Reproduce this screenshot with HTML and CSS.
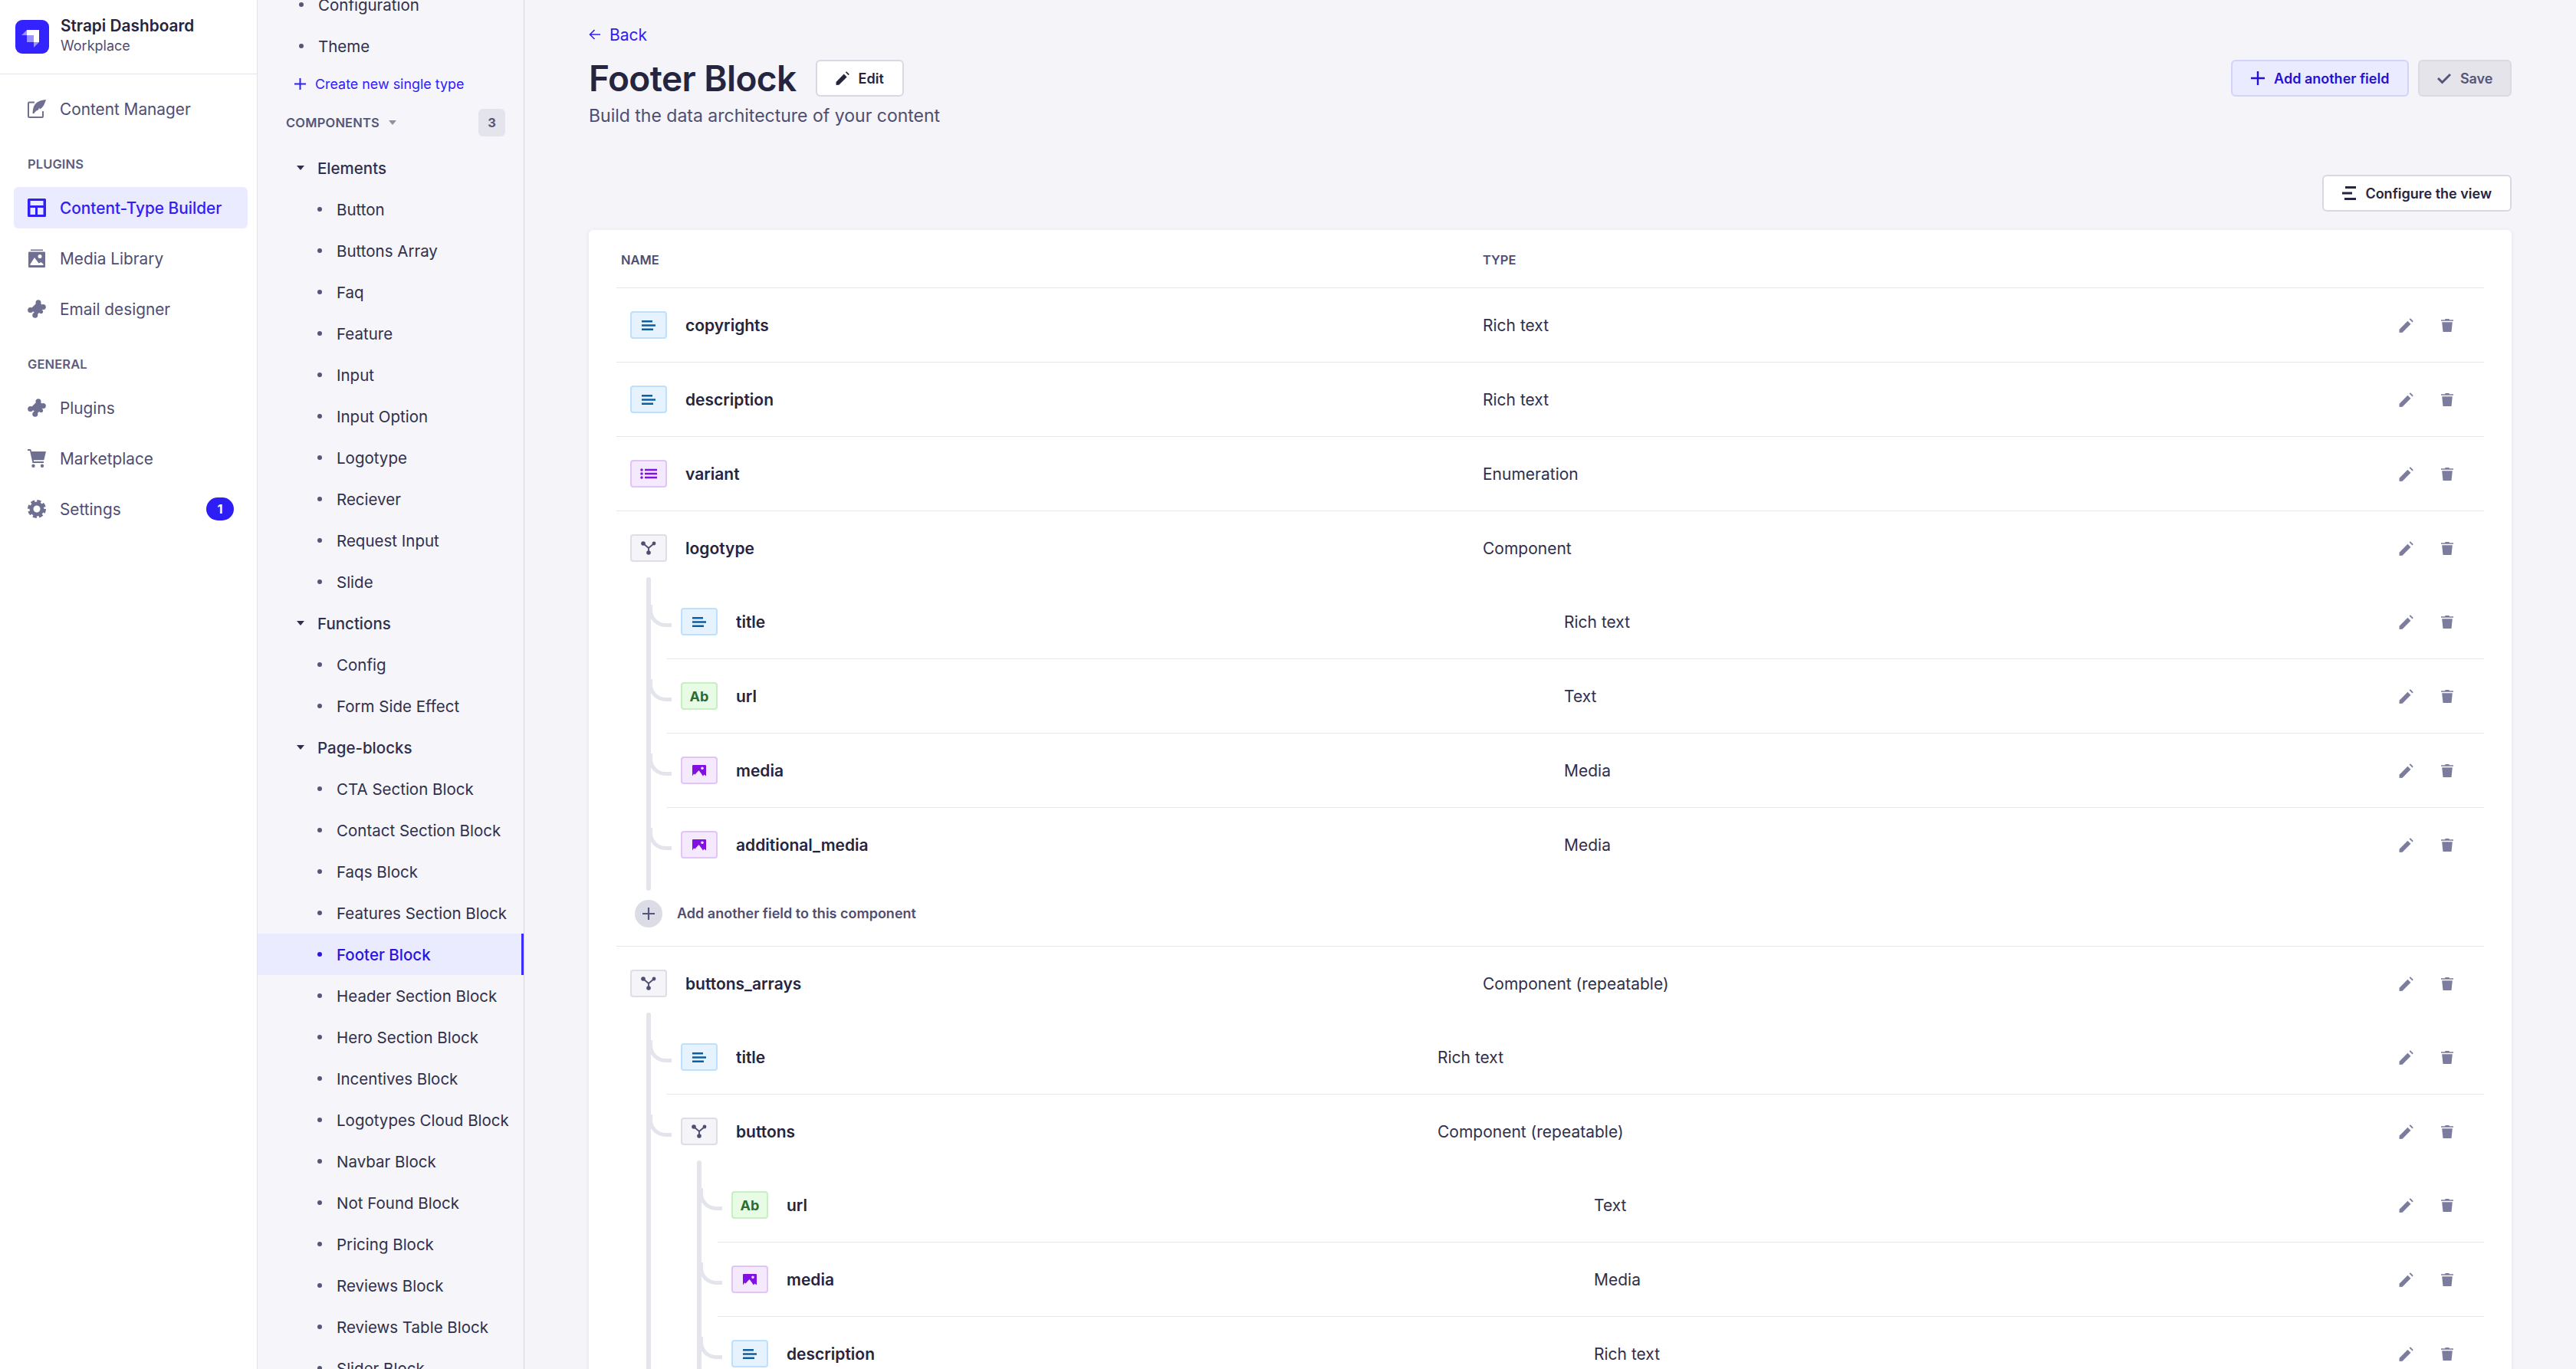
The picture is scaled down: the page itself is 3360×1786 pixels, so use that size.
FILE: index.html
```html
<!DOCTYPE html>
<html lang="en">
<head>
<meta charset="utf-8">
<title>Strapi Dashboard</title>
<link rel="stylesheet" href="styles.css">
</head>
<body>
<svg class="defs" aria-hidden="true">
  <symbol id="i-feather" viewBox="0 0 24 24"><path d="M9 3.600H2.200A1.200 1.200 0 0 0 1 4.800v17A1.200 1.200 0 0 0 2.200 23h16.600a1.200 1.200 0 0 0 1.200-1.200V15" fill="none" stroke="currentColor" stroke-width="2"/><path d="M24 0C18 .5 11 2.500 8.300 8.500 7.200 11 6.600 14.500 6.500 18l1.700.3C10 15.500 11.500 14 14 13.500l1-3 1 2c3.500-1.500 6-6 8-12.500z"/></symbol>
  <symbol id="i-layout" viewBox="0 0 24 24"><path fill-rule="evenodd" d="M1.500 0h21A1.500 1.500 0 0 1 24 1.500v21a1.500 1.500 0 0 1-1.500 1.500h-21A1.500 1.500 0 0 1 0 22.500v-21A1.500 1.500 0 0 1 1.500 0zM3.500 3v6h17V3zm0 9v9H10v-9zm9.500 0v9h7.500v-9z"/></symbol>
  <symbol id="i-media" viewBox="0 0 24 24"><path d="M4 .5h16V2H4z"/><path fill-rule="evenodd" d="M2 3.500h20a1 1 0 0 1 1 1V23a1 1 0 0 1-1 1H2a1 1 0 0 1-1-1V4.500a1 1 0 0 1 1-1zM16 7a2.500 2.500 0 1 0 0 5 2.500 2.500 0 0 0 0-5zM9 11l-5.500 8.500v1.500h17v-1.500l-3-2.500-3 1.500z"/></symbol>
  <symbol id="i-puzzle" viewBox="0 0 24 24"><path d="M12 4l8 8-8 8-8-8z"/><path d="M9 9l6-6 6 6-6 6z"/><circle cx="14" cy="3.800" r="3.500"/><circle cx="20.300" cy="9.500" r="3.500"/><circle cx="3.700" cy="13.500" r="3.500"/><circle cx="9.800" cy="20.300" r="3.500"/><circle cx="17.500" cy="15.500" r="2.600"/></symbol>
  <symbol id="i-cart" viewBox="0 0 24 24"><path d="M0 0h3.500a1 1 0 0 1 1 .8L5 3h19l-2.500 10.500a1 1 0 0 1-1 .8H7.800l.3 1.700H21v2H6.500L3 2H0z"/><circle cx="7.500" cy="21.700" r="2.200"/><circle cx="19" cy="21.700" r="2.200"/></symbol>
  <symbol id="i-gear" viewBox="0 0 24 24"><circle cx="12" cy="12" r="7" fill="none" stroke="currentColor" stroke-width="5"/><circle cx="12" cy="12" r="10.200" fill="none" stroke="currentColor" stroke-width="3.600" stroke-dasharray="5 3.010"/></symbol>
  <symbol id="i-plus" viewBox="0 0 18 18"><path d="M9 0v18M0 9h18" fill="none" stroke="currentColor" stroke-width="2.400"/></symbol>
  <symbol id="i-check" viewBox="0 0 18 14"><path d="M1 7l5.500 5.500L17 2" fill="none" stroke="currentColor" stroke-width="3"/></symbol>
  <symbol id="i-back" viewBox="0 0 15 14"><path d="M15 7H1.500M7.500 1L1.500 7l6 6" fill="none" stroke="currentColor" stroke-width="1.600"/></symbol>
  <symbol id="i-pencil" viewBox="0 0 20 20"><path d="M.6 15.500L12 3.900l4.300 4.300L4.800 19.700.6 20z"/><path d="M14.300 1.500L15.700.3l4 4-1.200 1.400z"/></symbol>
  <symbol id="i-trash" viewBox="0 0 16 18"><path d="M0 2.300h5.300V1h5.400v1.300H16v1.400H0zM1.200 5.300h13.600L13.500 18h-11z"/></symbol>
  <symbol id="i-config" viewBox="0 0 18 18"><path d="M4 0h14v3H4zM0 7.500h13v3H0zM3 15h15v3H3z"/></symbol>
  <symbol id="i-text" viewBox="0 0 18 13"><path d="M0 0h14v2.400H0zM0 5.300h18v2.400H0zM0 10.600h15V13H0z"/></symbol>
  <symbol id="i-enum" viewBox="0 0 22 14"><circle cx="2" cy="2" r="1.800"/><circle cx="2" cy="7" r="1.800"/><circle cx="2" cy="12" r="1.800"/><path d="M6 .8h16v2.500H6zM6 5.800h16v2.500H6zM6 10.800h16v2.500H6z"/></symbol>
  <symbol id="i-comp" viewBox="0 0 20 18"><path d="M3 3l7 6 7-6M10 9v6" fill="none" stroke="currentColor" stroke-width="1.900"/><circle cx="3" cy="3" r="2.800"/><circle cx="17" cy="3" r="2.400"/><circle cx="10" cy="15" r="2.800"/></symbol>
  <symbol id="i-image" viewBox="0 0 18 15"><path fill-rule="evenodd" d="M1 0h16a1 1 0 0 1 1 1v13.500l-2.500-2-1.500 2-2.500-3.500L8.500 7 3.500 12.500 2 11.500 0 14.500V1a1 1 0 0 1 1-1zm12 2.500a1.800 1.800 0 1 0 0 3.600 1.800 1.800 0 0 0 0-3.600z"/></symbol>
</svg>

<div class="app">
  <aside class="sidebar">
    <div class="brand">
      <svg class="brand-logo" viewBox="0 0 44 44"><rect width="44" height="44" rx="9" fill="#3223ff"/><path d="M15 13h16v16h-7v-9h-9z" fill="#fff"/><path d="M15 20h9v9h-9zM15 13v7H8zM24 29h7l-7 7z" fill="#fff" fill-opacity=".5"/></svg>
      <div>
        <div class="brand-name">Strapi Dashboard</div>
        <div class="brand-sub">Workplace</div>
      </div>
    </div>
    <nav class="nav">
      <a class="nav-item"><svg class="nav-icon"><use href="#i-feather"/></svg>Content Manager</a>
      <div class="nav-label">Plugins</div>
      <a class="nav-item nav-item-active"><svg class="nav-icon"><use href="#i-layout"/></svg>Content-Type Builder</a>
      <a class="nav-item"><svg class="nav-icon"><use href="#i-media"/></svg>Media Library</a>
      <a class="nav-item"><svg class="nav-icon"><use href="#i-puzzle"/></svg>Email designer</a>
      <div class="nav-label nav-label-second">General</div>
      <a class="nav-item"><svg class="nav-icon"><use href="#i-puzzle"/></svg>Plugins</a>
      <a class="nav-item"><svg class="nav-icon"><use href="#i-cart"/></svg>Marketplace</a>
      <a class="nav-item"><svg class="nav-icon"><use href="#i-gear"/></svg>Settings<span class="nav-badge">1</span></a>
    </nav>
  </aside>

  <aside class="subnav">
    <ul class="sub-list sub-list-top">
      <li class="sub-item">Configuration</li>
      <li class="sub-item">Theme</li>
    </ul>
    <a class="create-link"><svg class="create-plus"><use href="#i-plus"/></svg>Create new single type</a>
    <div class="sub-section">
      <span class="sub-section-title">Components</span><span class="caret caret-muted"></span>
      <span class="count">3</span>
    </div>
    <div class="sub-group"><span class="caret"></span>Elements</div>
    <ul class="sub-list">
      <li class="sub-item">Button</li>
      <li class="sub-item">Buttons Array</li>
      <li class="sub-item">Faq</li>
      <li class="sub-item">Feature</li>
      <li class="sub-item">Input</li>
      <li class="sub-item">Input Option</li>
      <li class="sub-item">Logotype</li>
      <li class="sub-item">Reciever</li>
      <li class="sub-item">Request Input</li>
      <li class="sub-item">Slide</li>
    </ul>
    <div class="sub-group"><span class="caret"></span>Functions</div>
    <ul class="sub-list">
      <li class="sub-item">Config</li>
      <li class="sub-item">Form Side Effect</li>
    </ul>
    <div class="sub-group"><span class="caret"></span>Page-blocks</div>
    <ul class="sub-list">
      <li class="sub-item">CTA Section Block</li>
      <li class="sub-item">Contact Section Block</li>
      <li class="sub-item">Faqs Block</li>
      <li class="sub-item">Features Section Block</li>
      <li class="sub-item sub-item-active">Footer Block</li>
      <li class="sub-item">Header Section Block</li>
      <li class="sub-item">Hero Section Block</li>
      <li class="sub-item">Incentives Block</li>
      <li class="sub-item">Logotypes Cloud Block</li>
      <li class="sub-item">Navbar Block</li>
      <li class="sub-item">Not Found Block</li>
      <li class="sub-item">Pricing Block</li>
      <li class="sub-item">Reviews Block</li>
      <li class="sub-item">Reviews Table Block</li>
      <li class="sub-item">Slider Block</li>
    </ul>
  </aside>

  <main class="main">
    <a class="back"><svg class="back-icon"><use href="#i-back"/></svg>Back</a>
    <header class="page-head">
      <h1 class="title">Footer Block</h1>
      <button class="btn btn-white btn-edit"><svg class="btn-icon"><use href="#i-pencil"/></svg>Edit</button>
      <div class="head-actions">
        <button class="btn btn-soft"><svg class="btn-icon"><use href="#i-plus"/></svg>Add another field</button>
        <button class="btn btn-disabled"><svg class="btn-icon"><use href="#i-check"/></svg>Save</button>
      </div>
    </header>
    <p class="subtitle">Build the data architecture of your content</p>
    <div class="toolbar">
      <button class="btn btn-white"><svg class="btn-icon"><use href="#i-config"/></svg>Configure the view</button>
    </div>

    <section class="card">
      <div class="table-head"><span>Name</span><span>Type</span></div>

      <div class="row"><span class="name"><span class="badge badge-blue"><svg class="bi-text"><use href="#i-text"/></svg></span>copyrights</span><span class="type">Rich text</span><span class="actions"><svg class="act-pencil"><use href="#i-pencil"/></svg><svg class="act-trash"><use href="#i-trash"/></svg></span></div>
      <div class="row"><span class="name"><span class="badge badge-blue"><svg class="bi-text"><use href="#i-text"/></svg></span>description</span><span class="type">Rich text</span><span class="actions"><svg class="act-pencil"><use href="#i-pencil"/></svg><svg class="act-trash"><use href="#i-trash"/></svg></span></div>
      <div class="row"><span class="name"><span class="badge badge-purple"><svg class="bi-enum"><use href="#i-enum"/></svg></span>variant</span><span class="type">Enumeration</span><span class="actions"><svg class="act-pencil"><use href="#i-pencil"/></svg><svg class="act-trash"><use href="#i-trash"/></svg></span></div>

      <div class="row row-open"><span class="name"><span class="badge badge-grey"><svg class="bi-comp"><use href="#i-comp"/></svg></span>logotype</span><span class="type">Component</span><span class="actions"><svg class="act-pencil"><use href="#i-pencil"/></svg><svg class="act-trash"><use href="#i-trash"/></svg></span></div>
      <div class="children children-logo">
        <div class="row branch"><span class="name"><span class="badge badge-blue"><svg class="bi-text"><use href="#i-text"/></svg></span>title</span><span class="type">Rich text</span><span class="actions"><svg class="act-pencil"><use href="#i-pencil"/></svg><svg class="act-trash"><use href="#i-trash"/></svg></span></div>
        <div class="row branch"><span class="name"><span class="badge badge-green">Ab</span>url</span><span class="type">Text</span><span class="actions"><svg class="act-pencil"><use href="#i-pencil"/></svg><svg class="act-trash"><use href="#i-trash"/></svg></span></div>
        <div class="row branch"><span class="name"><span class="badge badge-purple"><svg class="bi-image"><use href="#i-image"/></svg></span>media</span><span class="type">Media</span><span class="actions"><svg class="act-pencil"><use href="#i-pencil"/></svg><svg class="act-trash"><use href="#i-trash"/></svg></span></div>
        <div class="row row-open branch"><span class="name"><span class="badge badge-purple"><svg class="bi-image"><use href="#i-image"/></svg></span>additional_media</span><span class="type">Media</span><span class="actions"><svg class="act-pencil"><use href="#i-pencil"/></svg><svg class="act-trash"><use href="#i-trash"/></svg></span></div>
      </div>
      <div class="add-row"><span class="add-circle"><svg class="add-plus"><use href="#i-plus"/></svg></span>Add another field to this component</div>

      <div class="row row-open"><span class="name"><span class="badge badge-grey"><svg class="bi-comp"><use href="#i-comp"/></svg></span>buttons_arrays</span><span class="type">Component (repeatable)</span><span class="actions"><svg class="act-pencil"><use href="#i-pencil"/></svg><svg class="act-trash"><use href="#i-trash"/></svg></span></div>
      <div class="children children-arrays">
        <div class="row branch"><span class="name"><span class="badge badge-blue"><svg class="bi-text"><use href="#i-text"/></svg></span>title</span><span class="type">Rich text</span><span class="actions"><svg class="act-pencil"><use href="#i-pencil"/></svg><svg class="act-trash"><use href="#i-trash"/></svg></span></div>
        <div class="row row-open branch"><span class="name"><span class="badge badge-grey"><svg class="bi-comp"><use href="#i-comp"/></svg></span>buttons</span><span class="type">Component (repeatable)</span><span class="actions"><svg class="act-pencil"><use href="#i-pencil"/></svg><svg class="act-trash"><use href="#i-trash"/></svg></span></div>
        <div class="children children-nested">
          <div class="row branch"><span class="name"><span class="badge badge-green">Ab</span>url</span><span class="type">Text</span><span class="actions"><svg class="act-pencil"><use href="#i-pencil"/></svg><svg class="act-trash"><use href="#i-trash"/></svg></span></div>
          <div class="row branch"><span class="name"><span class="badge badge-purple"><svg class="bi-image"><use href="#i-image"/></svg></span>media</span><span class="type">Media</span><span class="actions"><svg class="act-pencil"><use href="#i-pencil"/></svg><svg class="act-trash"><use href="#i-trash"/></svg></span></div>
          <div class="row branch"><span class="name"><span class="badge badge-blue"><svg class="bi-text"><use href="#i-text"/></svg></span>description</span><span class="type">Rich text</span><span class="actions"><svg class="act-pencil"><use href="#i-pencil"/></svg><svg class="act-trash"><use href="#i-trash"/></svg></span></div>
        </div>
      </div>
    </section>
  </main>
</div>
</body>
</html>
```
FILE: styles.css
```css
* { box-sizing: border-box; }
html, body { margin: 0; height: 100%; }
body {
  font-family: Inter, "Noto Sans", sans-serif;
  color: #25253f;
  background: #f4f4f9;
  overflow: hidden;
}
a { color: inherit; text-decoration: none; }
ul { list-style: none; margin: 0; padding: 0; }
svg { fill: currentColor; flex: none; display: block; }
.defs { position: absolute; width: 0; height: 0; }

.app { display: flex; height: 100vh; overflow: hidden; }

/* primary nav */
.sidebar {
  width: 336px;
  flex: none;
  background: #fff;
  border-right: 1px solid #e3e3ea;
}
.brand {
  height: 97px;
  display: flex;
  align-items: center;
  gap: 15px;
  padding: 0 0 1px 20px;
  border-bottom: 1px solid #e3e3ea;
}
.brand-logo { width: 44px; height: 44px; }
.brand-name { font-size: 20.8px; font-weight: 600; line-height: 26px; margin-top: -2px; }
.brand-sub { font-size: 18px; line-height: 25px; color: #4e4e72; }
.nav { padding: 18px 12px 0 18px; }
.nav-item {
  display: flex;
  align-items: center;
  gap: 18px;
  height: 54px;
  padding: 0 18px;
  margin-bottom: 12px;
  border-radius: 6px;
  font-size: 20.8px;
  color: #4e4e72;
}
.nav-icon { width: 24px; height: 24px; color: #6f6f92; }
.nav-item-active {
  background: #eaebfe;
  color: #3120f5;
  font-weight: 500;
}
.nav-item-active .nav-icon { color: #3120f5; }
.nav-badge {
  margin-left: auto;
  width: 36px;
  height: 30px;
  border-radius: 15px;
  background: #2d1ef5;
  color: #fff;
  font-size: 16.5px;
  font-weight: 700;
  line-height: 30px;
  text-align: center;
}
.nav-label {
  height: 24px;
  margin: 33px 0 6px 18px;
  font-size: 16.5px;
  font-weight: 600;
  line-height: 24px;
  letter-spacing: .1px;
  text-transform: uppercase;
  color: #5d5d7e;
}
.nav-label-second { margin-top: 33px; }
.nav-label + .nav-item { margin-top: 18px; }

/* secondary nav */
.subnav {
  width: 348px;
  flex: none;
  height: 100%;
  overflow: hidden;
  background: #f5f5fa;
  border-right: 1px solid #d6d6df;
}
.sub-list-top { margin-top: -21px; }
.sub-list-top .sub-item { padding-left: 54px; }
.sub-item {
  display: flex;
  align-items: center;
  gap: 19px;
  height: 54px;
  padding-left: 78px;
  font-size: 20.500px;
  color: #30304c;
}
.sub-item::before {
  content: "";
  width: 6px;
  height: 6px;
  border-radius: 50%;
  background: #55557a;
  flex: none;
}
.sub-item-active {
  background: #eaebfe;
  border-right: 3px solid #3a2cff;
  color: #2a13e6;
  font-weight: 500;
}
.sub-item-active::before { background: #2a13e6; }
.create-link {
  display: flex;
  align-items: center;
  gap: 12px;
  height: 36px;
  margin: 4px 0 0 48px;
  font-size: 17.900px;
  color: #3120f5;
}
.create-plus { width: 15px; height: 15px; }
.sub-section {
  display: flex;
  align-items: center;
  height: 36px;
  margin-top: 15px;
  padding: 0 24px 0 37px;
  font-size: 16.5px;
  font-weight: 600;
  color: #55557a;
}
.sub-section-title { text-transform: uppercase; letter-spacing: .2px; }
.count {
  margin-left: auto;
  width: 35px;
  height: 36px;
  border-radius: 6px;
  background: #e4e4ec;
  font-weight: 700;
  line-height: 36px;
  text-align: center;
}
.caret {
  width: 0;
  height: 0;
  border-left: 5.5px solid transparent;
  border-right: 5.500px solid transparent;
  border-top: 6px solid #30304c;
  flex: none;
}
.caret-muted { margin-left: 12px; border-top-color: #8e8ea9; }
.sub-group {
  display: flex;
  align-items: center;
  gap: 17px;
  height: 54px;
  padding-left: 51px;
  font-size: 20.500px;
  font-weight: 500;
  color: #30304c;
}
.sub-section + .sub-group { margin-top: 14px; }

/* main */
.main { flex: 1; min-width: 0; padding: 30px 84px 0; }
.back {
  display: flex;
  align-items: center;
  gap: 12px;
  height: 30px;
  font-size: 21px;
  color: #3120f5;
}
.back-icon { width: 15px; height: 14px; }
.page-head {
  display: flex;
  align-items: center;
  margin-top: 18px;
  height: 48px;
}
.title { margin: 0 25px 0 0; font-size: 46px; line-height: 48px; font-weight: 600; letter-spacing: -.6px; }
.head-actions { display: flex; gap: 12px; margin-left: auto; }
.subtitle {
  margin: 7px 0 0;
  font-size: 23px;
  line-height: 36px;
  color: #4e4e72;
}
.toolbar { display: flex; justify-content: flex-end; margin-top: 59px; }
.btn {
  display: flex;
  align-items: center;
  gap: 12px;
  height: 48px;
  padding: 0 24px;
  border-radius: 6px;
  border: 2px solid;
  font: 600 18px Inter, sans-serif;
}
.btn-icon { width: 18px; height: 18px; }
.btn-white { background: #fff; border-color: #d8d8e2; color: #25253f; }
.btn-soft { background: #eaebfe; border-color: #d2d3fb; color: #2410d6; }
.btn-disabled { background: #e4e4ea; border-color: #dadae3; color: #55557a; padding: 0 22.500px; }

.card {
  margin-top: 24px;
  padding: 0 36px;
  background: #fff;
  border-radius: 6px;
  box-shadow: 0 1px 6px rgba(33, 33, 52, .08);
}
.table-head {
  display: grid;
  grid-template-columns: 1124px 1fr;
  align-items: center;
  height: 76px;
  padding: 2px 0 0 6px;
  border-bottom: 1px solid #e6e6ed;
  font-size: 16.5px;
  font-weight: 600;
  text-transform: uppercase;
  color: #4e4e72;
}
.row {
  display: grid;
  grid-template-columns: 1112px 1fr auto;
  align-items: center;
  position: relative;
  height: 97px;
  border-bottom: 1px solid #e6e6ed;
  padding: 0 40px 0 18px;
  font-size: 21px;
}
.row-open { height: 96px; border-bottom: 0; }
.name { display: flex; align-items: center; gap: 24px; font-weight: 600; }
.type { color: #30304c; }
.actions { display: flex; align-items: center; gap: 36px; color: #7c7c9e; }
.act-pencil { width: 19px; height: 19px; }
.act-trash { width: 16px; height: 18px; }
.badge {
  display: flex;
  align-items: center;
  justify-content: center;
  width: 48px;
  height: 36px;
  border: 2px solid;
  border-radius: 4px;
  font-size: 18px;
  font-weight: 700;
  flex: none;
}
.badge-blue { background: #e6f3fe; border-color: #bce0fd; color: #0f5e9e; }
.badge-purple { background: #f5e9fd; border-color: #e2c4f7; color: #8210e0; }
.badge-grey { background: #f4f4f9; border-color: #dedee6; color: #4e4e72; }
.badge-green { background: #e8fbe5; border-color: #c6f0c2; color: #2a6b3a; }
.bi-text { width: 18px; height: 13px; }
.bi-enum { width: 22px; height: 14px; }
.bi-comp { width: 20px; height: 18px; }
.bi-image { width: 18px; height: 15px; }

.children { position: relative; margin-left: 66px; }
.children::before {
  content: "";
  position: absolute;
  left: -27px;
  top: -10px;
  bottom: -12px;
  width: 6px;
  border-radius: 3px;
  background: #e4e4ec;
}
.children-arrays::before { bottom: -200px; }
.children-logo .row { grid-template-columns: 1152px 1fr auto; }
.children-arrays .row { grid-template-columns: 987px 1fr auto; }
.children-arrays .children-nested .row { grid-template-columns: 1125px 1fr auto; }
.branch::before {
  content: "";
  position: absolute;
  left: -24px;
  top: 26px;
  width: 25px;
  height: 24px;
  border-left: 5px solid #e4e4ec;
  border-bottom: 5px solid #e4e4ec;
  border-bottom-left-radius: 22px;
}

.add-row {
  display: flex;
  align-items: center;
  gap: 19px;
  height: 85px;
  padding: 0 0 1px 24px;
  border-bottom: 1px solid #e6e6ed;
  font-size: 18px;
  font-weight: 600;
  color: #4e4e72;
}
.add-circle {
  display: flex;
  align-items: center;
  justify-content: center;
  width: 36px;
  height: 36px;
  border-radius: 50%;
  background: #dcdce6;
  color: #55557a;
}
.add-plus { width: 16px; height: 16px; }
```
